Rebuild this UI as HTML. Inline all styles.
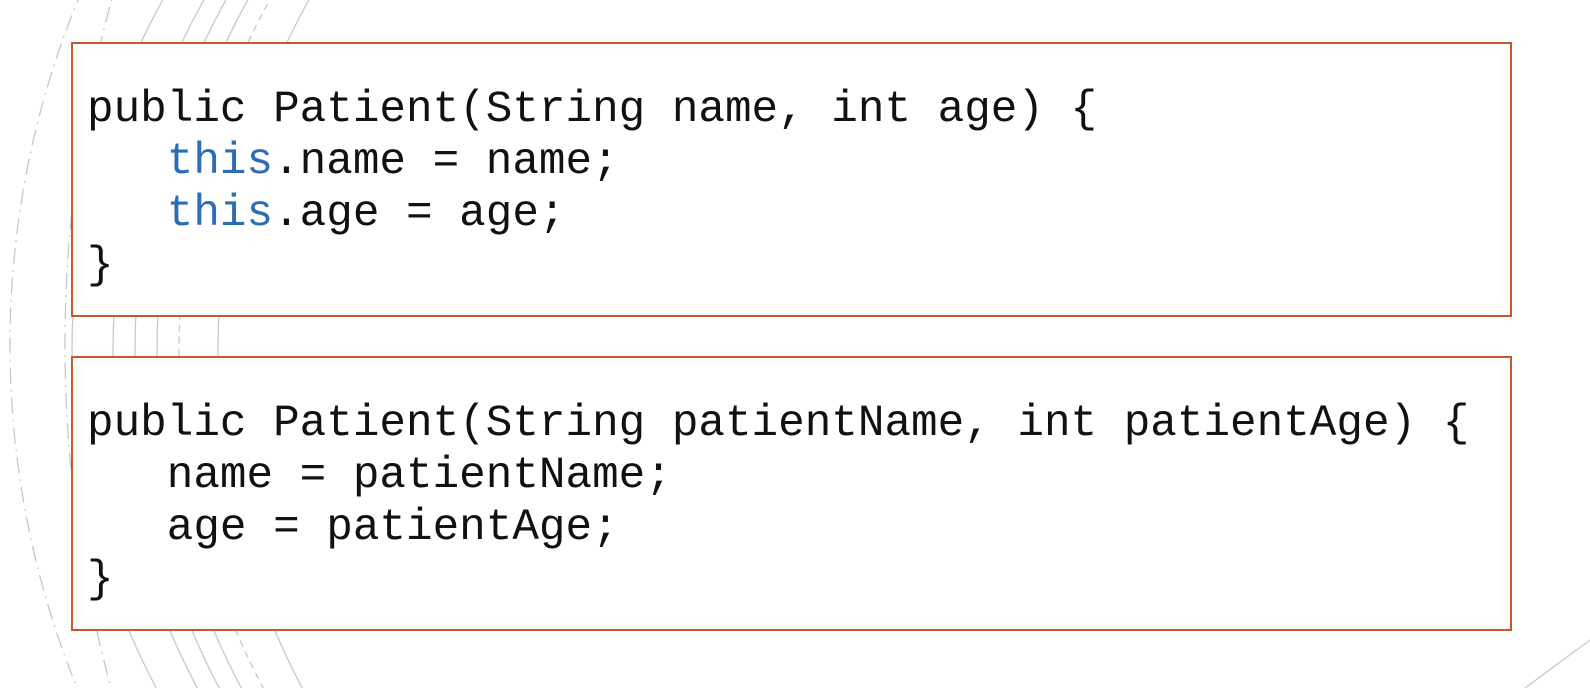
<!DOCTYPE html>
<html style="overflow:hidden"><head><style>
html,body{margin:0;width:1590px;height:688px;overflow:hidden}
body{background:#fff;position:relative}
svg{position:absolute;left:0;top:0;overflow:hidden}
.box{position:absolute;left:71px;width:1437px;height:271px;border:2px solid #c4592b;background:#fff;overflow:hidden}
pre{margin:0;position:absolute;left:14px;font-family:"Liberation Mono",monospace;font-size:44.3px;line-height:52px;color:#111}
.k{color:#2e6db4}
</style></head><body>
<svg width="1590" height="688" viewBox="0 0 1590 688" fill="none" stroke="#c8c8c8" stroke-width="1.3">
<defs><clipPath id="c"><rect x="0" y="0" width="500" height="688"/></clipPath></defs>
<g clip-path="url(#c)">
<circle cx="792" cy="350" r="720"/>
<circle cx="833" cy="350" r="720"/>
<circle cx="855" cy="350" r="720"/>
<circle cx="877" cy="350" r="720"/>
<circle cx="899" cy="350" r="720" stroke-dasharray="7 5"/>
<circle cx="938" cy="350" r="720"/>
<circle cx="920" cy="345" r="910" stroke-dasharray="16 6 2 6"/>
<circle cx="1365" cy="345" r="1300" stroke-dasharray="16 6 2 6"/>
</g>
<line x1="1525" y1="688" x2="1590" y2="640"/>
</svg>
<div class="box" style="top:42px"><pre style="top:40px">public Patient(String name, int age) {
   <span class="k">this</span>.name = name;
   <span class="k">this</span>.age = age;
}</pre></div>
<div class="box" style="top:356px"><pre style="top:40px">public Patient(String patientName, int patientAge) {
   name = patientName;
   age = patientAge;
}</pre></div>
</body></html>
